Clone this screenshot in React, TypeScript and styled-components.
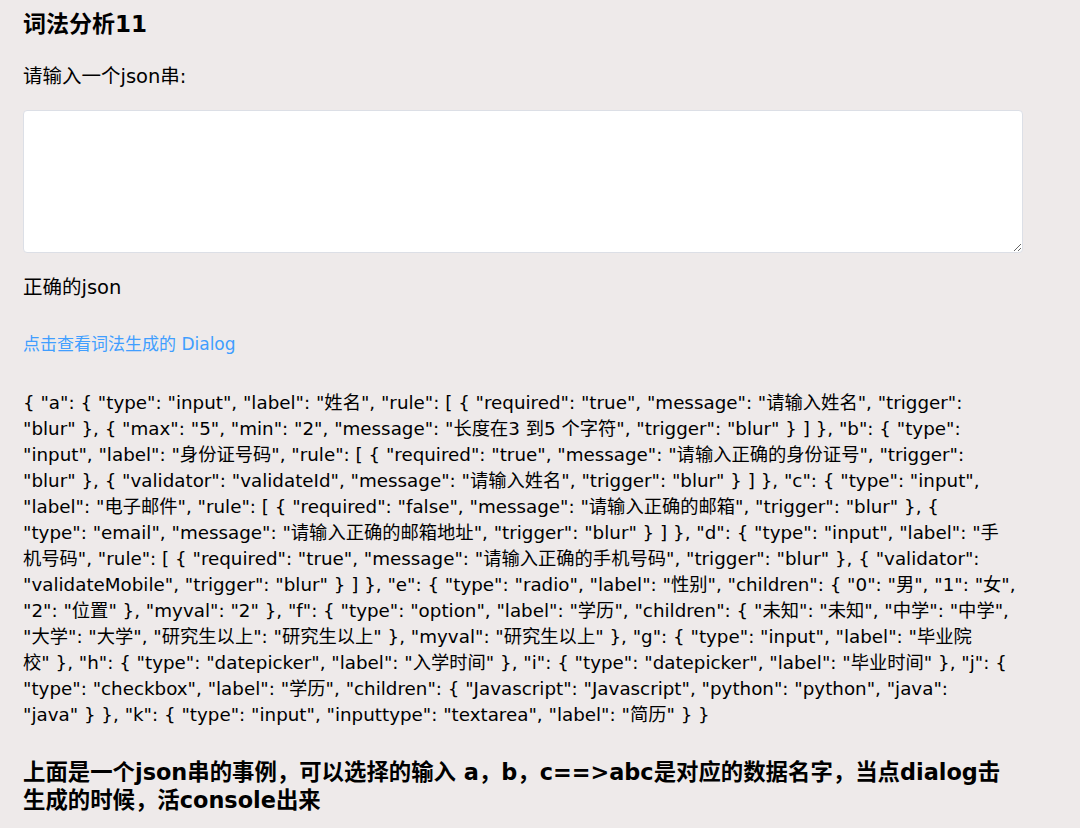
import React from "react";
import styled, { createGlobalStyle } from "styled-components";

const Global = createGlobalStyle`
  html, body { margin: 0; padding: 0; background: #eeeaea; }
  body { font-family: "DejaVu Sans", "Noto Sans CJK SC", sans-serif; color: #000; }
`;

const Page = styled.div`
  padding: 8px 0 0 23px;
  width: 1000px;
  display: flex;
  flex-direction: column;
`;

const Title = styled.h2`
  margin: 0;
  font-size: 23px;
  line-height: 32px;
  font-weight: 700;
`;

const Label = styled.div<{ $top: number }>`
  margin-top: ${(p) => p.$top}px;
  font-size: 19.5px;
  line-height: 26px;
`;

const Area = styled.textarea`
  margin-top: 20px;
  box-sizing: border-box;
  width: 1000px;
  height: 143px;
  border: 1px solid #dcdfe6;
  border-radius: 4px;
  background: #fff;
  resize: vertical;
  font-family: inherit;
  padding: 5px 15px;
  outline: none;
`;

const LinkButton = styled.button`
  margin-top: 32px;
  align-self: flex-start;
  border: none;
  background: none;
  padding: 0;
  font-family: "DejaVu Sans", "Noto Sans CJK SC", sans-serif;
  font-size: 17px;
  line-height: 22px;
  color: #409eff;
  cursor: pointer;
`;

const JsonBlock = styled.div`
  margin-top: 35px;
  font-size: 18.3px;
  line-height: 26px;
`;

const JsonLine = styled.span`
  display: block;
  white-space: nowrap;
`;

const Note = styled.h3`
  margin: 30px 0 0;
  font-size: 22.4px;
  line-height: 28px;
  font-weight: 700;
  white-space: nowrap;
`;

const lines = [
  '{ "a": { "type": "input", "label": "姓名", "rule": [ { "required": "true", "message": "请输入姓名", "trigger":',
  '"blur" }, { "max": "5", "min": "2", "message": "长度在3 到5 个字符", "trigger": "blur" } ] }, "b": { "type":',
  '"input", "label": "身份证号码", "rule": [ { "required": "true", "message": "请输入正确的身份证号", "trigger":',
  '"blur" }, { "validator": "validateId", "message": "请输入姓名", "trigger": "blur" } ] }, "c": { "type": "input",',
  '"label": "电子邮件", "rule": [ { "required": "false", "message": "请输入正确的邮箱", "trigger": "blur" }, {',
  '"type": "email", "message": "请输入正确的邮箱地址", "trigger": "blur" } ] }, "d": { "type": "input", "label": "手',
  '机号码", "rule": [ { "required": "true", "message": "请输入正确的手机号码", "trigger": "blur" }, { "validator":',
  '"validateMobile", "trigger": "blur" } ] }, "e": { "type": "radio", "label": "性别", "children": { "0": "男", "1": "女",',
  '"2": "位置" }, "myval": "2" }, "f": { "type": "option", "label": "学历", "children": { "未知": "未知", "中学": "中学",',
  '"大学": "大学", "研究生以上": "研究生以上" }, "myval": "研究生以上" }, "g": { "type": "input", "label": "毕业院',
  '校" }, "h": { "type": "datepicker", "label": "入学时间" }, "i": { "type": "datepicker", "label": "毕业时间" }, "j": {',
  '"type": "checkbox", "label": "学历", "children": { "Javascript": "Javascript", "python": "python", "java":',
  '"java" } }, "k": { "type": "input", "inputtype": "textarea", "label": "简历" } }',
];

export default function App() {
  return (
    <Page>
      <Global />
      <Title>词法分析11</Title>
      <Label $top={24}>请输入一个json串:</Label>
      <Area />
      <Label $top={22}>正确的json</Label>
      <LinkButton>点击查看词法生成的 Dialog</LinkButton>
      <JsonBlock>
        {lines.map((l, i) => (
          <JsonLine key={i}>{l}</JsonLine>
        ))}
      </JsonBlock>
      <Note>
        上面是一个json串的事例，可以选择的输入 a，b，c==&gt;abc是对应的数据名字，当点dialog击
        <br />
        生成的时候，活console出来
      </Note>
    </Page>
  );
}
